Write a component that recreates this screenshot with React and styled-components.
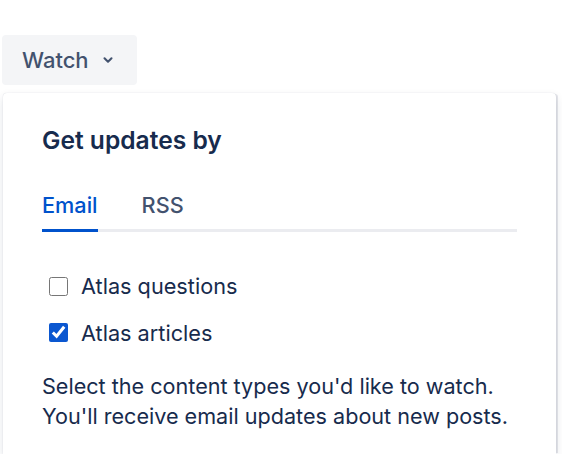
import React, { useState } from "react";
import styled, { createGlobalStyle } from "styled-components";

const GlobalStyle = createGlobalStyle`
  body {
    margin: 0;
    background: #ffffff;
    font-family: Inter, "Noto Sans", sans-serif;
    color: #172b4d;
    overflow: hidden;
  }
`;

const Page = styled.div`
  padding: 35px 0 0 2px;
  width: 560px;
  height: 454px;
  box-sizing: border-box;
  display: flex;
  flex-direction: column;
  align-items: flex-start;
  gap: 8px;
`;

const WatchButton = styled.button`
  display: flex;
  align-items: center;
  gap: 12px;
  height: 50px;
  padding: 0 22px 0 20px;
  border: none;
  border-radius: 4px;
  background: #f4f5f7;
  color: #42526e;
  font-family: inherit;
  font-size: 22px;
  font-weight: 500;
  cursor: pointer;
`;

const Popup = styled.div`
  margin-left: 1px;
  width: 553px;
  flex: 1;
  box-sizing: border-box;
  padding: 32px 39px 0;
  background: #ffffff;
  border-radius: 4px 4px 0 0;
  box-shadow: 0 4px 10px rgba(9, 30, 66, 0.12), 0 0 1px rgba(9, 30, 66, 0.2),
    3px 0 0 -1px #e6e7eb;
`;

const Heading = styled.h2`
  margin: 0;
  font-size: 24.6px;
  font-weight: 600;
  line-height: 30px;
`;

const Tabs = styled.div`
  display: flex;
  gap: 44px;
  margin-top: 36px;
  width: 475px;
  border-bottom: 3px solid #ebecf0;
`;

const Tab = styled.button`
  padding: 0 0 10px;
  margin-bottom: -3px;
  border: none;
  border-bottom: 3px solid ${(p) => (p.$active ? "#0052cc" : "transparent")};
  background: none;
  color: ${(p) => (p.$active ? "#0052cc" : "#42526e")};
  font-family: inherit;
  font-size: 21.7px;
  font-weight: 500;
  line-height: 28px;
  cursor: pointer;
`;

const Options = styled.div`
  display: flex;
  flex-direction: column;
  gap: 16.5px;
  margin-top: 39px;
  padding-left: 7px;
`;

const Option = styled.label`
  display: flex;
  align-items: center;
  gap: 13px;
  font-size: 21.7px;
  line-height: 30px;
`;

const Box = styled.input`
  width: 19px;
  height: 19px;
  margin: 0;
  accent-color: #0b57d0;
`;

const Note = styled.p`
  margin: 23px 0 0;
  font-size: 21.6px;
  line-height: 30px;
`;

function Chevron() {
  return (
    <svg width="14" height="14" viewBox="0 0 24 24" fill="none">
      <path
        d="M6 9l6 6 6-6"
        stroke="#42526e"
        strokeWidth="3.5"
        strokeLinecap="round"
        strokeLinejoin="round"
      />
    </svg>
  );
}

export default function App() {
  const [tab, setTab] = useState("email");
  return (
    <>
      <GlobalStyle />
      <Page>
        <WatchButton>
          Watch
          <Chevron />
        </WatchButton>
        <Popup>
          <Heading>Get updates by</Heading>
          <Tabs>
            <Tab $active={tab === "email"} onClick={() => setTab("email")}>
              Email
            </Tab>
            <Tab $active={tab === "rss"} onClick={() => setTab("rss")}>
              RSS
            </Tab>
          </Tabs>
          <Options>
            <Option>
              <Box type="checkbox" />
              Atlas questions
            </Option>
            <Option>
              <Box type="checkbox" defaultChecked />
              Atlas articles
            </Option>
          </Options>
          <Note>
            Select the content types you'd like to watch.
            <br />
            You'll receive email updates about new posts.
          </Note>
        </Popup>
      </Page>
    </>
  );
}
